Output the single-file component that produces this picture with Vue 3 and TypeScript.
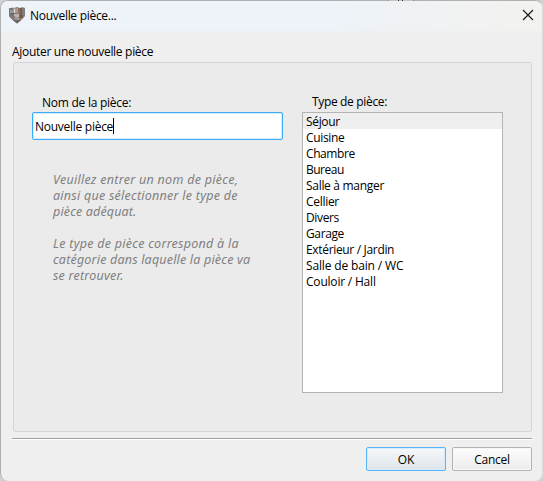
<script setup lang="ts">
import { ref } from 'vue'

interface Line {
  label: string
  spacing: number
}

const roomName = ref('Nouvelle pièce')
const selected = ref(0)
const roomTypes: Line[] = [
  { label: 'Séjour', spacing: -0.33 },
  { label: 'Cuisine', spacing: -0.35 },
  { label: 'Chambre', spacing: -0.42 },
  { label: 'Bureau', spacing: -0.5 },
  { label: 'Salle à manger', spacing: -0.3 },
  { label: 'Cellier', spacing: -0.3 },
  { label: 'Divers', spacing: -0.35 },
  { label: 'Garage', spacing: -0.38 },
  { label: 'Extérieur / Jardin', spacing: -0.33 },
  { label: 'Salle de bain / WC', spacing: -0.15 },
  { label: 'Couloir / Hall', spacing: -0.2 },
]
const help: Line[][] = [
  [
    { label: 'Veuillez entrer un nom de pièce,', spacing: 0.28 },
    { label: 'ainsi que sélectionner le type de', spacing: 0.25 },
    { label: 'pièce adéquat.', spacing: 0.15 },
  ],
  [
    { label: 'Le type de pièce correspond à la', spacing: 0.26 },
    { label: 'catégorie dans laquelle la pièce va', spacing: 0.19 },
    { label: 'se retrouver.', spacing: 0.22 },
  ],
]
</script>

<template>
  <div class="desktop">
    <div class="dialog">
      <header class="titlebar">
        <svg class="app-icon" width="16" height="17" viewBox="0 0 16 17">
          <defs>
            <clipPath id="shield"><path d="M0 1.5L3 .7L5 1L8 0L11 1L13.500 .5L16 1V9L14 11.500L8 16.500L2 11.500L0 9Z" /></clipPath>
          </defs>
          <g clip-path="url(#shield)">
            <rect width="16" height="17" fill="#8b7e76" />
            <rect width="5" height="10" fill="#77787b" />
            <rect x="1" y="3" width="3" height="3" fill="#94969a" />
            <rect x="4" width="2" height="7" fill="#a79384" />
            <rect x="6" y="1" width="3" height="5" fill="#ad9788" />
            <rect x="5" y="2" width="1" height="4" fill="#e4dcd6" />
            <rect x="9" y="1" width="2" height="7" fill="#8f7360" />
            <rect x="11" width="2" height="8" fill="#755d4e" />
            <rect x="13" width="3" height="9" fill="#807c7c" />
            <rect x="2" y="6" width="4" height="2" fill="#6d6661" />
            <rect x="5" y="7" width="5" height="3" fill="#bdb5b0" />
            <rect x="10" y="8" width="4" height="3" fill="#765b4d" />
            <rect x="1" y="9" width="5" height="4" fill="#817b79" />
            <rect x="6" y="10" width="4" height="3" fill="#a09a97" />
            <rect x="4" y="13" width="9" height="4" fill="#6b6562" />
          </g>
        </svg>
        <h1 class="title">Nouvelle pièce...</h1>
        <svg class="close" width="12" height="12" viewBox="0 0 12 12">
          <path d="M1 1L11 11M11 1L1 11" stroke="#1a1a1a" stroke-width="1.150" fill="none" />
        </svg>
      </header>

      <p class="caption">Ajouter une nouvelle pièce</p>
      <section class="group">
        <div class="left">
          <label class="label name-label">Nom de la pièce:</label>
          <div class="field"><span class="value">{{ roomName }}</span><i class="caret"></i></div>
          <div class="help">
            <p v-for="(lines, p) in help" :key="p">
              <span
                v-for="line in lines"
                :key="line.label"
                class="line"
                :style="{ letterSpacing: line.spacing + 'px' }"
              >{{ line.label }}</span>
            </p>
          </div>
        </div>
        <div class="right">
          <label class="label type-label">Type de pièce:</label>
          <ul class="list">
            <li
              v-for="(t, i) in roomTypes"
              :key="t.label"
              :class="{ current: i === selected }"
              :style="{ letterSpacing: t.spacing + 'px' }"
              @click="selected = i"
            >{{ t.label }}</li>
          </ul>
        </div>
      </section>
      <div class="rule"></div>
      <footer class="actions">
        <button class="btn primary">OK</button>
        <button class="btn cancel">Cancel</button>
      </footer>
    </div>
    <div class="behind"></div>
  </div>
</template>

<style>
body { margin: 0; overflow: hidden; }
</style>

<style scoped>
* { box-sizing: border-box; }
.desktop {
  position: relative;
  width: 543px;
  height: 481px;
  background: #d2d2d2;
  font-family: "Open Sans", "Noto Sans", sans-serif;
  font-size: 12px;
  line-height: 16px;
  color: #000;
  white-space: nowrap;
  overflow: hidden;
}
/* sliver of the window underneath, showing above the title bar */
.behind {
  position: absolute;
  top: 0;
  left: 388px;
  width: 26px;
  height: 1px;
  background: linear-gradient(90deg, #888 1px, #c4c4c4 1px 10px, #333 10px 11px, #c4c4c4 11px 14px, #333 14px 15px, #c4c4c4 15px 25px, #888 25px);
}
.dialog {
  width: 543px;
  height: 481px;
  display: flex;
  flex-direction: column;
  border: 1px solid #b0b0b0;
  border-right-color: #dcdcdc;
  border-bottom: 0;
  border-radius: 8px;
  background: #efefef;
  overflow: hidden;
}
.titlebar {
  flex: none;
  display: flex;
  align-items: flex-start;
  height: 30px;
  padding: 6px 2px 0 8px;
  background: linear-gradient(100deg, #edf3f9 0%, #edf3f9 60%, #f3f2ee 100%);
}
.title { margin: 1px 0 0 5px; font-size: 12px; font-weight: 400; line-height: 16px; letter-spacing: -.29px; }
.close { margin: 2px 6px 0 auto; }
.caption { margin: 13px 0 0 11px; height: 16px; letter-spacing: -.3px; }
.group {
  flex: none;
  display: flex;
  width: 519px;
  height: 370px;
  margin: 2px 0 0 12px;
  padding: 31px 0 0 18px;
  border: 1px solid #d5d5d5;
  border-radius: 2px;
  background: #ebebeb;
}
.left { width: 251px; }
.label { display: block; height: 16px; margin-left: 10px; }
.name-label { margin-top: 1px; letter-spacing: -.25px; }
.type-label { letter-spacing: -.34px; }
.field {
  display: flex;
  align-items: center;
  height: 28px;
  margin-top: 1px;
  padding: 1px 0 0 2px;
  border: 1px solid #3daaf5;
  border-radius: 2px;
  background: #fff;
  box-shadow: inset 0 0 0 1px #d7edfd;
}
.value { letter-spacing: -.27px; }
.caret { width: 1px; height: 16px; margin-top: -2px; background: #000; }
.help {
  margin: 32px 0 0 21px;
  color: #808080;
  font-family: "Noto Sans", "Open Sans", sans-serif;
  font-size: 12.5px;
  font-style: italic;
}
.help p { margin: 0 0 16px; }
.line { display: block; }
.right { width: 201px; margin-left: 19px; }
.list {
  height: 281px;
  margin: 2px 0 0;
  padding: 0;
  border: 1px solid #b4b4b4;
  background: #fff;
  list-style: none;
}
.list li { height: 16px; padding-left: 3px; line-height: 18px; }
.list .current { background: #efefef; }
.rule {
  flex: none;
  width: 520px;
  height: 2px;
  margin: 6px 0 0 11px;
  background: linear-gradient(#a0a0a0 50%, #fff 50%);
}
.actions { display: flex; justify-content: flex-end; gap: 6px; padding: 7px 10px 0 0; }
.btn {
  width: 80px;
  height: 24px;
  padding: 2px 0 0;
  border: 1px solid #b4b4b4;
  border-radius: 2px;
  background: linear-gradient(#fdfdfd, #ececec);
  box-shadow: inset 0 0 0 1px #f7f7f7;
  font: inherit;
  color: #000;
}
.cancel { letter-spacing: -.3px; }
.primary {
  border-color: #55b5f7;
  background: linear-gradient(#f6f8fa, #dfe5ea);
  box-shadow: inset 0 0 0 1px #d5ecfc;
}
</style>
